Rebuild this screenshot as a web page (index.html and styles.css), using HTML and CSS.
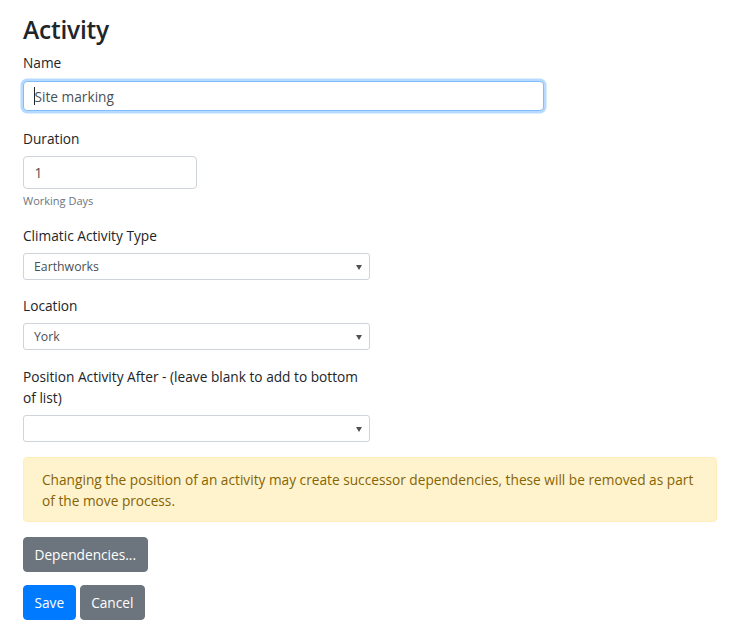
FILE: index.html
```html
<!DOCTYPE html>
<html>
<head>
<meta charset="utf-8">
<link rel="stylesheet" href="styles.css">
</head>
<body>
<div class="container">
  <h3 class="title">Activity</h3>
  <div class="form-group first">
    <label class="label">Name</label>
    <div class="field w75 caret-wrap">
      <input class="control focus" type="text" value="Site marking">
      <span class="caret"></span>
    </div>
  </div>
  <div class="form-group wide">
    <label class="label">Duration</label>
    <div class="field w25">
      <input class="control" type="text" value="1">
    </div>
    <small class="muted">Working Days</small>
  </div>
  <div class="form-group">
    <label class="label">Climatic Activity Type</label>
    <div class="field w50 select-wrap">
      <select class="control sm"><option>Earthworks</option></select>
    </div>
  </div>
  <div class="form-group wide">
    <label class="label">Location</label>
    <div class="field w50 select-wrap">
      <select class="control sm"><option>York</option></select>
    </div>
  </div>
  <div class="form-group">
    <label class="label w50 block">Position Activity After - (leave blank to add to bottom of list)</label>
    <div class="field w50 select-wrap">
      <select class="control sm"><option></option></select>
    </div>
  </div>
  <div class="alert">Changing the position of an activity may create successor dependencies, these will be removed as part of the move process.</div>
  <div class="btn-row deps">
    <button class="btn secondary">Dependencies...</button>
  </div>
  <div class="btn-row actions">
    <button class="btn primary">Save</button>
    <button class="btn secondary">Cancel</button>
  </div>
</div>
</body>
</html>
```
FILE: styles.css
```css
html, body {
  margin: 0;
  padding: 0;
  background: #fff;
}
body {
  font-family: "Open Sans", "Noto Sans", sans-serif;
  font-size: 13.7px;
  line-height: 21px;
  color: #212529;
}
.container {
  padding: 15px 23px 0 23px;
}
.title {
  margin: 0 0 8px 0;
  font-size: 24.5px;
  font-weight: 600;
  line-height: 29px;
  letter-spacing: -0.2px;
}
.form-group {
  margin-bottom: 15px;
}
.form-group.first {
  margin-bottom: 17px;
}
.form-group.wide {
  margin-bottom: 16px;
}
.label {
  display: block;
  margin-bottom: 7px;
}
.w75 { width: 75%; }
.w50 { width: 50%; }
.w25 { width: 25%; }
.field {
  position: relative;
}
.control {
  display: block;
  box-sizing: border-box;
  width: 100%;
  height: 33px;
  padding: 0 10.5px;
  font-family: inherit;
  font-size: 13.7px;
  color: #495057;
  background: #fff;
  border: 1px solid #ced4da;
  border-radius: 4px;
  outline: none;
  margin: 0;
}
.control.focus {
  height: 30px;
  border-color: #80bdff;
  box-shadow: 0 0 0 2.5px rgba(0, 123, 255, 0.28);
}
.label + .caret-wrap {
  margin-top: 8px;
}
.caret {
  position: absolute;
  left: 11px;
  top: 6px;
  width: 1px;
  height: 18px;
  background: #212529;
}
.control.sm {
  height: 27px;
  font-size: 12.3px;
  padding: 0 10px;
  -webkit-appearance: none;
  appearance: none;
  border-radius: 3px;
}
.select-wrap::after {
  content: "";
  position: absolute;
  right: 8px;
  top: 12px;
  border-left: 3px solid transparent;
  border-right: 3px solid transparent;
  border-top: 5px solid #505050;
}
.muted {
  display: block;
  margin-top: 3px;
  font-size: 11px;
  line-height: 17px;
  color: #6c757d;
}
.alert {
  padding: 10.5px 18px;
  margin-bottom: 15px;
  background: #fff3cd;
  border: 1px solid #ffeeba;
  border-radius: 4px;
  color: #856404;
}
.btn-row {
  margin-bottom: 15px;
}
.btn-row.deps {
  margin-bottom: 13px;
}
.actions {
  display: flex;
  gap: 4px;
}
.btn {
  font-family: inherit;
  font-size: 13.7px;
  line-height: 21px;
  padding: 6px 10.5px;
  border: 1px solid transparent;
  border-radius: 4px;
  color: #fff;
  cursor: pointer;
}
.secondary {
  background: #6c757d;
  border-color: #6c757d;
}
.primary {
  background: #007bff;
  border-color: #007bff;
}
```
